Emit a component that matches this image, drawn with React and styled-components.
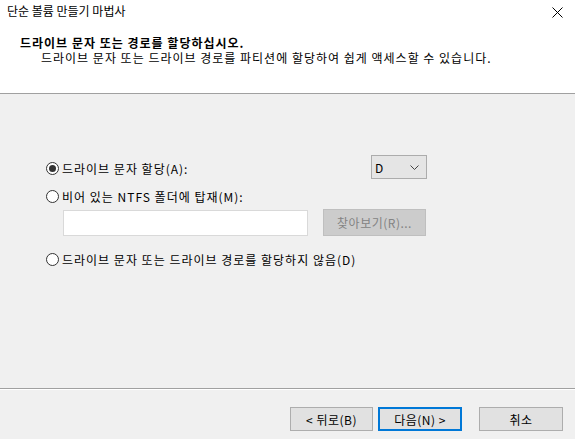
import React from "react";
import styled, { createGlobalStyle, css } from "styled-components";

const Global = createGlobalStyle`
  html, body {
    margin: 0;
    padding: 0;
    background: #f0f0f0;
  }
  * {
    box-sizing: border-box;
  }
`;

const Window = styled.div`
  width: 575px;
  height: 439px;
  display: flex;
  flex-direction: column;
  background: #f0f0f0;
  font-family: "Noto Sans CJK KR", "Noto Sans", sans-serif;
  font-size: 12px;
  color: #000;
  overflow: hidden;
`;

const TitleBar = styled.div`
  height: 24px;
  display: flex;
  align-items: center;
  justify-content: space-between;
  padding: 0 7px 0 7px;
  background: #fff;
`;

const TitleText = styled.span`
  font-size: 12px;
  line-height: 1;
  margin-top: -2px;
`;

const CloseButton = styled.div`
  width: 24px;
  height: 24px;
  display: flex;
  align-items: center;
  justify-content: center;
  margin-right: -1px;
`;

const Header = styled.div`
  height: 70px;
  background: #fff;
  padding: 12px 0 0 20px;
  border-bottom: 1px solid #a0a0a0;
  letter-spacing: 1px;
  display: flex;
  flex-direction: column;
  gap: 1px;
`;

const HeaderTitle = styled.div`
  font-weight: bold;
  line-height: 14px;
  height: 14px;
`;

const HeaderSub = styled.div`
  padding-left: 21px;
  line-height: 14px;
  height: 14px;
`;

const Body = styled.div`
  flex: 1;
  padding: 61px 0 0 46px;
  display: flex;
  flex-direction: column;
  letter-spacing: 1px;
`;

const Row = styled.div`
  display: flex;
  align-items: center;
  height: ${(p) => p.h || 18}px;
  margin-top: ${(p) => p.mt || 0}px;
  padding-left: ${(p) => p.indent || 0}px;
`;

const RadioLabel = styled.label`
  display: flex;
  align-items: center;
  gap: 3px;
  width: ${(p) => (p.w ? `${p.w}px` : "auto")};
  margin-top: ${(p) => p.shift || 0}px;
`;

const RadioCircle = styled.span`
  width: 13px;
  height: 13px;
  border-radius: 50%;
  border: 1px solid #333;
  background: #fff;
  display: flex;
  align-items: center;
  justify-content: center;
  flex-shrink: 0;
  ${(p) =>
    p.checked &&
    css`
      &::after {
        content: "";
        width: 7px;
        height: 7px;
        border-radius: 50%;
        background: #333;
      }
    `}
`;

const Select = styled.div`
  width: 56px;
  height: 24px;
  background: #e5e5e5;
  border: 1px solid #acacac;
  display: flex;
  align-items: center;
  justify-content: space-between;
  padding: 0 7px 0 3px;
`;

const TextBox = styled.div`
  width: 245px;
  height: 26px;
  background: #fff;
  border: 1px solid #d9d9d9;
`;

const Button = styled.div`
  width: ${(p) => p.w || 83}px;
  height: ${(p) => p.h || 24}px;
  display: flex;
  align-items: center;
  justify-content: center;
  background: #e1e1e1;
  border: 1px solid #adadad;
  margin-left: ${(p) => p.ml || 0}px;
  letter-spacing: 0.5px;
  ${(p) =>
    p.primary &&
    css`
      border-color: #0078d7;
      box-shadow: inset 0 0 0 1px #0078d7;
    `}
  ${(p) =>
    p.disabled &&
    css`
      background: #cccccc;
      border-color: #bfbfbf;
      color: #838383;
    `}
`;

const Footer = styled.div`
  height: 51px;
  border-top: 1px solid #a0a0a0;
  box-shadow: inset 0 1px 0 #fff;
  display: flex;
  justify-content: flex-end;
  padding: 18px 12px 0 0;
`;

const Radio = ({ checked, children, w, shift }) => (
  <RadioLabel w={w} shift={shift}>
    <RadioCircle checked={checked} />
    <span>{children}</span>
  </RadioLabel>
);

export default function App() {
  return (
    <Window>
      <Global />
      <TitleBar>
        <TitleText>단순 볼륨 만들기 마법사</TitleText>
        <CloseButton>
          <svg width="11" height="11" viewBox="0 0 11 11">
            <path d="M0.5 0.5 L10.5 10.5 M10.5 0.5 L0.5 10.5" stroke="#000" strokeWidth="1" />
          </svg>
        </CloseButton>
      </TitleBar>
      <Header>
        <HeaderTitle>드라이브 문자 또는 경로를 할당하십시오.</HeaderTitle>
        <HeaderSub>드라이브 문자 또는 드라이브 경로를 파티션에 할당하여 쉽게 액세스할 수 있습니다.</HeaderSub>
      </Header>
      <Body>
        <Row h={24}>
          <Radio checked w={325} shift={2}>
            드라이브 문자 할당(A):
          </Radio>
          <Select>
            <span>D</span>
            <svg width="9" height="5" viewBox="0 0 9 5">
              <path d="M0.5 0.5 L4.5 4.5 L8.5 0.5" fill="none" stroke="#444" strokeWidth="1" />
            </svg>
          </Select>
        </Row>
        <Row mt={8}>
          <Radio>비어 있는 NTFS 폴더에 탑재(M):</Radio>
        </Row>
        <Row h={27} mt={4} indent={17}>
          <TextBox />
          <Button disabled w={103} h={27} ml={15}>
            찾아보기(R)...
          </Button>
        </Row>
        <Row mt={14}>
          <Radio>드라이브 문자 또는 드라이브 경로를 할당하지 않음(D)</Radio>
        </Row>
      </Body>
      <Footer>
        <Button>&lt; 뒤로(B)</Button>
        <Button primary w={84} ml={5}>
          다음(N) &gt;
        </Button>
        <Button w={84} ml={17}>
          취소
        </Button>
      </Footer>
    </Window>
  );
}
